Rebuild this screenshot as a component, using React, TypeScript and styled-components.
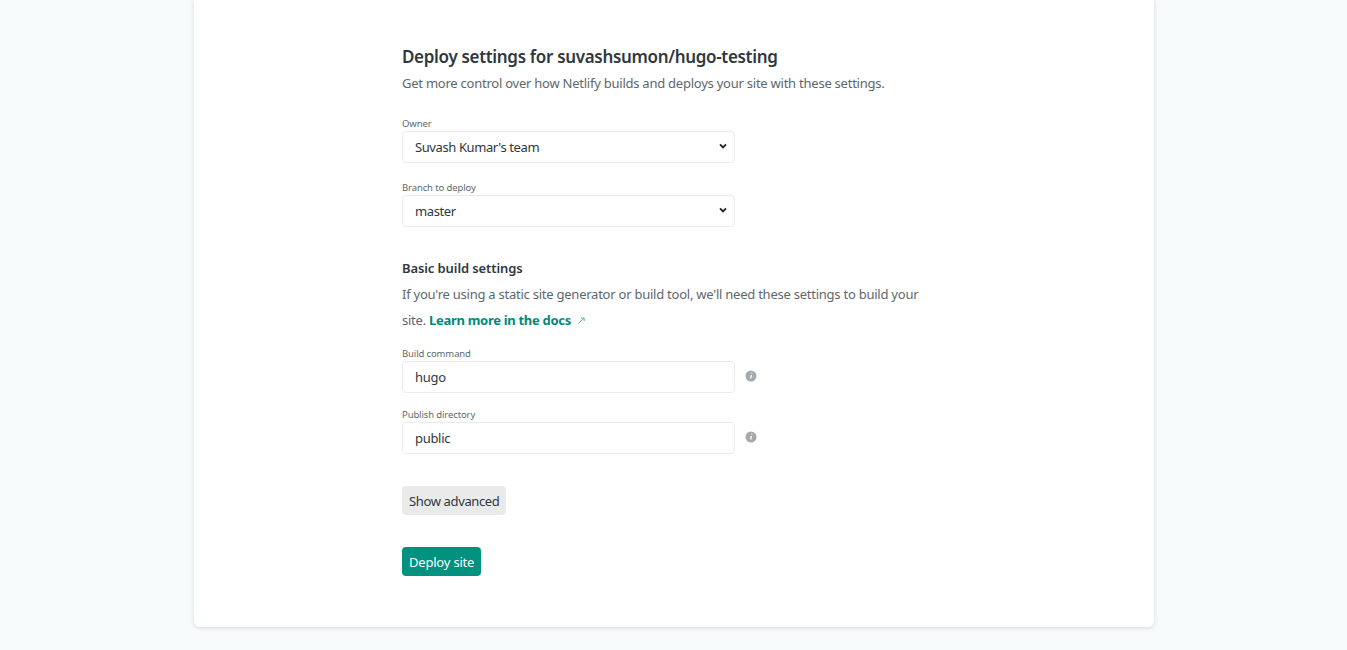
import React from "react";
import styled, { createGlobalStyle } from "styled-components";

const Global = createGlobalStyle`
  html, body { margin: 0; padding: 0; background: #f6fafb; }
  body { font-family: "Noto Sans", "Open Sans", sans-serif; overflow: hidden; }
  * { box-sizing: border-box; }
`;

const Page = styled.main`
  height: 650px;
  display: flex;
  justify-content: center;
  align-items: flex-start;
  padding-left: 1px;
`;

const Card = styled.section`
  width: 960px;
  height: 627px;
  background: #fff;
  border-radius: 0 0 6px 6px;
  box-shadow: 0 1px 4px rgba(14, 30, 37, 0.14);
  padding: 44px 208px 0;
`;

const Title = styled.h1`
  margin: 0;
  font-size: 17px;
  line-height: 26px;
  font-weight: 600;
  letter-spacing: -0.32px;
  color: #2f383d;
`;

const Lead = styled.p`
  margin: 0 0 21px;
  font-size: 13px;
  line-height: 26px;
  letter-spacing: -0.24px;
  color: #5e676c;
`;

const Field = styled.div<{ $gap: number }>`
  margin-bottom: ${(p) => p.$gap}px;
`;

const Label = styled.label`
  display: block;
  font-size: 9.5px;
  line-height: 13px;
  letter-spacing: -0.12px;
  color: #60696e;
  margin-bottom: 1px;
`;

const Row = styled.div`
  display: flex;
  align-items: center;
  gap: 10px;
`;

const SelectWrap = styled.div`
  position: relative;
  width: 333px;
`;

const Select = styled.select`
  display: block;
  width: 100%;
  height: 32px;
  padding: 0 12px;
  appearance: none;
  background: #fff;
  border: 1px solid #e9ebeb;
  border-radius: 4px;
  font: 400 13px "Noto Sans", sans-serif;
  letter-spacing: -0.4px;
  color: #2f383d;
`;

const Chevron = styled.svg`
  position: absolute;
  top: 12px;
  right: 8px;
  width: 8px;
  height: 6px;
  pointer-events: none;
`;

const Input = styled.input`
  display: block;
  width: 333px;
  height: 32px;
  padding: 0 12px;
  background: #fff;
  border: 1px solid #e9ebeb;
  border-radius: 4px;
  font: 400 13px "Noto Sans", sans-serif;
  letter-spacing: -0.3px;
  color: #2f383d;
`;

const Section = styled.h2`
  margin: 0;
  font-size: 13px;
  line-height: 25px;
  font-weight: 600;
  letter-spacing: -0.1px;
  color: #2f383d;
`;

const Body = styled.p`
  margin: 0 0 14px;
  width: 530px;
  font-size: 13px;
  line-height: 26px;
  letter-spacing: -0.24px;
  color: #5e676c;
`;

const DocLink = styled.a`
  color: #00897b;
  font-weight: 700;
  letter-spacing: -0.3px;
  text-decoration: none;
`;

const Arrow = styled.svg`
  width: 9px;
  height: 7px;
  margin-left: 6px;
  vertical-align: 1px;
`;

const Info = styled.svg`
  width: 12px;
  height: 12px;
  margin-top: -2px;
`;

const Button = styled.button<{ $primary?: boolean }>`
  display: block;
  height: 29px;
  padding: 0 7px;
  border: 0;
  border-radius: 4px;
  font: 400 13px "Noto Sans", sans-serif;
  letter-spacing: ${(p) => (p.$primary ? "-0.2px" : "-0.36px")};
  background: ${(p) => (p.$primary ? "#00917f" : "#e9ebeb")};
  color: ${(p) => (p.$primary ? "#fff" : "#2f383d")};
`;

const Actions = styled.div`
  display: flex;
  flex-direction: column;
  align-items: flex-start;
  gap: 32px;
  margin-top: 32px;
`;

const ChevronIcon = () => (
  <Chevron viewBox="0 0 8 6" aria-hidden="true">
    <path d="M1 1.3 4 4.3 7 1.3" fill="none" stroke="#1e2428" strokeWidth="1.9" />
  </Chevron>
);

const InfoIcon = () => (
  <Info viewBox="0 0 12 12" aria-hidden="true">
    <circle cx="6" cy="6" r="5.5" fill="#a3a9ac" />
    <path d="M6.4 2.6h1v1h-1zM5.6 5h1.4l-.6 3.6h-1.2z" fill="#fff" />
  </Info>
);

export default function App() {
  return (
    <Page>
      <Global />
      <Card>
        <Title>Deploy settings for suvashsumon/hugo-testing</Title>
        <Lead>Get more control over how Netlify builds and deploys your site with these settings.</Lead>

        <Field $gap={18}>
          <Label>Owner</Label>
          <SelectWrap>
            <Select defaultValue="team">
              <option value="team">Suvash Kumar's team</option>
            </Select>
            <ChevronIcon />
          </SelectWrap>
        </Field>

        <Field $gap={29}>
          <Label>Branch to deploy</Label>
          <SelectWrap>
            <Select defaultValue="master">
              <option value="master">master</option>
            </Select>
            <ChevronIcon />
          </SelectWrap>
        </Field>

        <Section>Basic build settings</Section>
        <Body>
          If you're using a static site generator or build tool, we'll need these settings to build your site.{" "}
          <DocLink href="#">Learn more in the docs</DocLink>
          <Arrow viewBox="0 0 9 7" aria-hidden="true">
            <path d="M1.5 6.5 7 1M4 1h3.2v3" fill="none" stroke="#3a9c90" strokeWidth="0.8" />
          </Arrow>
        </Body>

        <Field $gap={15}>
          <Label>Build command</Label>
          <Row>
            <Input defaultValue="hugo" />
            <InfoIcon />
          </Row>
        </Field>

        <Field $gap={0}>
          <Label>Publish directory</Label>
          <Row>
            <Input defaultValue="public" />
            <InfoIcon />
          </Row>
        </Field>

        <Actions>
          <Button>Show advanced</Button>
          <Button $primary>Deploy site</Button>
        </Actions>
      </Card>
    </Page>
  );
}
